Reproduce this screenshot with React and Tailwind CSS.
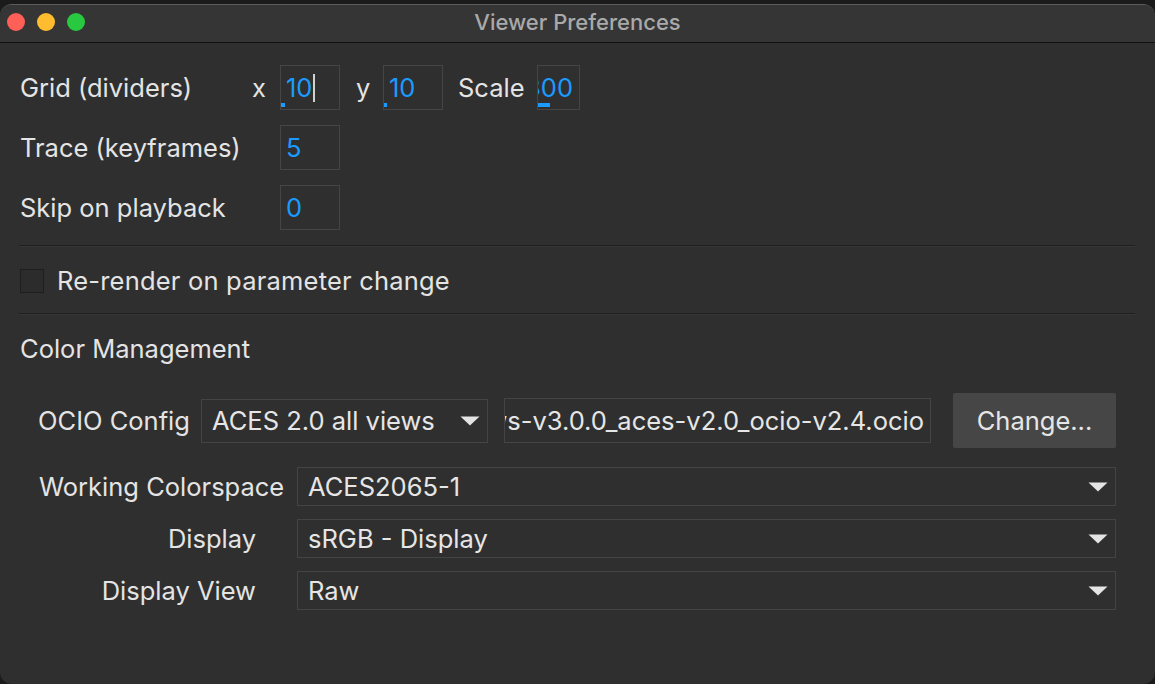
import React from "react";

function NumBox({ value, w = "w-[60px]", mark = "w-[4px]", cursor = false, clip = false }) {
  return (
    <div className={`relative h-[45px] ${w} border border-[#454545] flex items-center overflow-hidden ${clip ? "justify-end pr-[6px]" : "pl-[5px]"}`}>
      <span className="text-[25.5px] text-[#1a9bff] whitespace-nowrap leading-none">{value}</span>
      {cursor && <span className="ml-[1px] w-[1.5px] h-[28px] bg-[#d0d0d0]" />}
      <span className={`absolute left-0 bottom-[2px] h-[4px] ${mark} bg-[#1a9bff]`} />
    </div>
  );
}

function Arrow() {
  return (
    <svg width="20" height="10" viewBox="0 0 20 10" className="shrink-0">
      <path d="M0.5 0.5 H19.5 L10 9.5 Z" fill="#e4e4e4" />
    </svg>
  );
}

function Combo({ value, className = "" }) {
  return (
    <div className={`flex items-center justify-between border border-[#444] pl-[10px] pr-[7px] ${className}`}>
      <span className="text-[25.5px] text-[#e6e6e6] whitespace-nowrap">{value}</span>
      <Arrow />
    </div>
  );
}

export default function App() {
  return (
    <div className="w-[1155px] h-[684px] bg-[#1b1b1b] overflow-hidden pt-[4px] font-['Inter','Noto_Sans',sans-serif] text-[#e4e4e4] text-[25.5px] leading-[30px]">
      <div className="h-[680px] rounded-[12px] bg-[#2f2f2f] border-t border-[#5c5c5c] overflow-hidden flex flex-col">
        <div className="relative h-[38px] shrink-0 bg-[#353535] border-b border-[#111111] flex items-center justify-center pb-[3px]">
          <div className="absolute left-[7px] top-[8px] flex gap-[12px]">
            <span className="w-[18px] h-[18px] rounded-full bg-[#fe5f57]" />
            <span className="w-[18px] h-[18px] rounded-full bg-[#febc2e]" />
            <span className="w-[18px] h-[18px] rounded-full bg-[#28c840]" />
          </div>
          <span className="text-[22px] text-[#a9a9a9] font-medium">Viewer Preferences</span>
        </div>

        <div className="flex flex-col pl-[19px] pr-[20px] pt-[22px]">
          <div className="flex flex-col gap-[15px] pl-[1px]">
            <div className="flex items-center h-[45px]">
              <span className="w-[232px]">Grid (dividers)</span>
              <span className="w-[28px]">x</span>
              <NumBox value="10" cursor />
              <span className="ml-[16px] w-[27px]">y</span>
              <NumBox value="10" mark="w-[3px]" />
              <span className="ml-[15px] w-[79px]">Scale</span>
              <NumBox value="300" w="w-[43px]" mark="w-[12px]" clip />
            </div>
            <div className="flex items-center h-[45px]">
              <span className="w-[260px]">Trace (keyframes)</span>
              <div className="h-[45px] w-[60px] border border-[#454545] flex items-center pl-[5px]">
                <span className="text-[#1a9bff] leading-none">5</span>
              </div>
            </div>
            <div className="flex items-center h-[45px]">
              <span className="w-[260px]">Skip on playback</span>
              <div className="h-[45px] w-[60px] border border-[#454545] flex items-center pl-[5px]">
                <span className="text-[#1a9bff] leading-none">0</span>
              </div>
            </div>
          </div>

          <div className="mt-[15px] h-px bg-[#1f1f1f] shadow-[0_1px_0_#363636]" />

          <div className="flex items-center gap-[13px] mt-[23px] pl-[1px] h-[24px]">
            <span className="w-[24px] h-[24px] border border-[#1e1e1e] bg-[#2c2c2c] shrink-0" />
            <span className="tracking-[0.2px]">Re-render on parameter change</span>
          </div>

          <div className="mt-[20px] h-px bg-[#1f1f1f] shadow-[0_1px_0_#363636]" />

          <div className="mt-[20px] pl-[1px] h-[30px] flex items-center">Color Management</div>

          <div className="mt-[29px] flex items-center h-[55px] pl-[19px]">
            <span className="w-[163px]">OCIO Config</span>
            <Combo value="ACES 2.0 all views" className="w-[287px] h-[44px]" />
            <div className="ml-[16px] w-[427px] h-[45px] border border-[#444] flex items-center justify-end overflow-hidden pr-[6px]">
              <span className="text-[#e6e6e6] whitespace-nowrap">studio-config-all-views-v3.0.0_aces-v2.0_ocio-v2.4.ocio</span>
            </div>
            <button className="ml-[22px] w-[163px] h-[55px] bg-[#464646] rounded-[2px] text-[#e6e6e6]">Change...</button>
          </div>

          <div className="mt-[19px] flex flex-col gap-[13px] pl-[20px]">
            <div className="flex items-center h-[39px]">
              <span className="w-[258px]">Working Colorspace</span>
              <Combo value="ACES2065-1" className="flex-1 h-[39px] mr-[19px]" />
            </div>
            <div className="flex items-center h-[39px]">
              <span className="w-[258px] text-right pr-[41px]">Display</span>
              <Combo value="sRGB - Display" className="flex-1 h-[39px] mr-[19px]" />
            </div>
            <div className="flex items-center h-[39px]">
              <span className="w-[258px] text-right pr-[41px]">Display View</span>
              <Combo value="Raw" className="flex-1 h-[39px] mr-[19px]" />
            </div>
          </div>
        </div>
      </div>
    </div>
  );
}
